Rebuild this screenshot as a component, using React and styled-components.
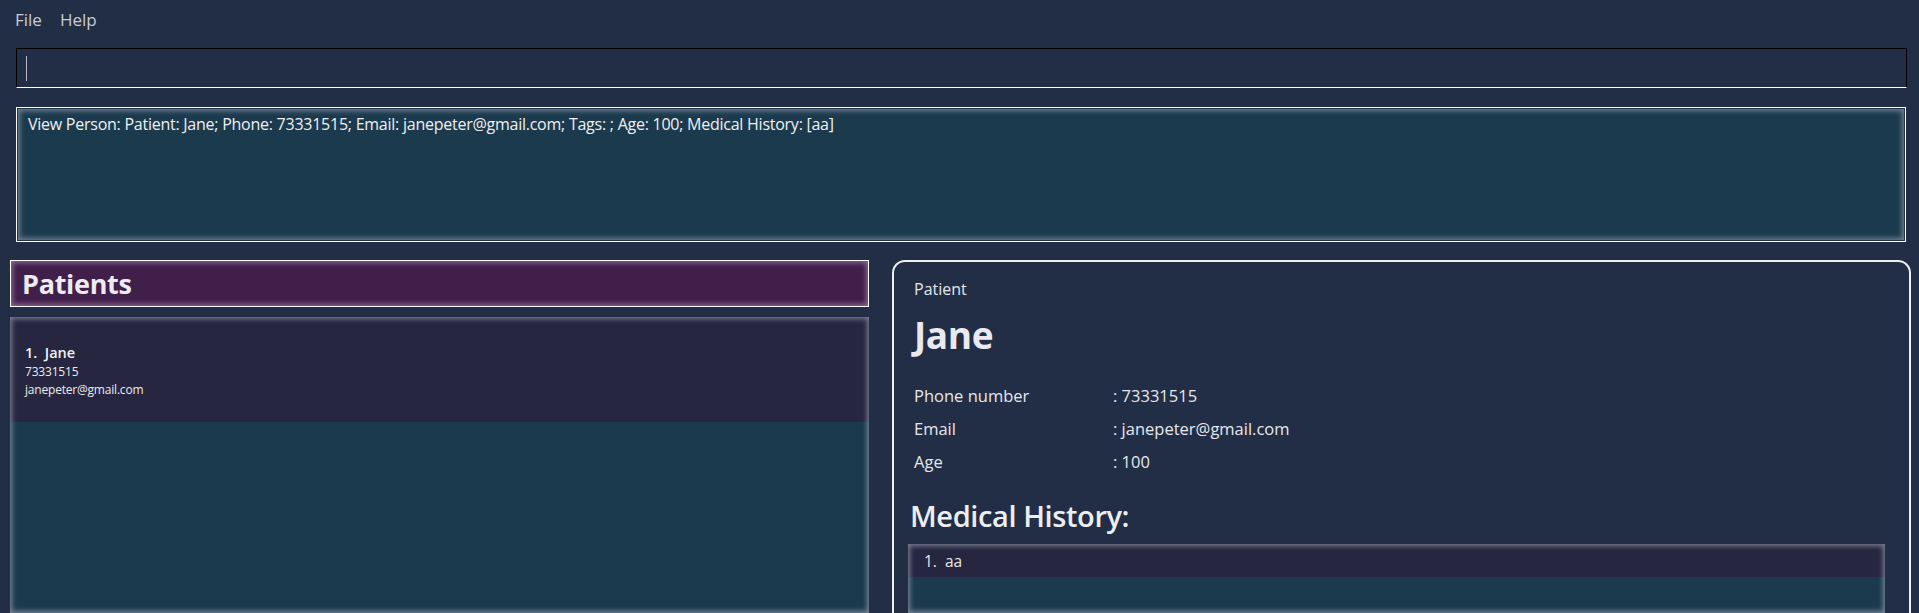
import styled, { createGlobalStyle } from "styled-components"

const GlobalStyle = createGlobalStyle`
  *, *::before, *::after {
    box-sizing: border-box;
  }
  html, body {
    margin: 0;
    padding: 0;
    background: #222e45;
  }
  body {
    font-family: 'Open Sans', 'Noto Sans', sans-serif;
    color: #e8e8e8;
    overflow: hidden;
  }
`

const Window = styled.div`
  height: 613px;
  display: flex;
  flex-direction: column;
  background: #222e45;
  overflow: hidden;
`

const MenuBar = styled.div`
  height: 39px;
  flex-shrink: 0;
  display: flex;
  align-items: center;
  gap: 18px;
  padding-left: 15px;
`

const MenuItem = styled.span`
  font-size: 17px;
  color: #c9ccd2;
`

const CommandBox = styled.div`
  height: 40px;
  flex-shrink: 0;
  margin: 9px 12px 0 16px;
  border: 1px solid #000;
  border-bottom-color: #fff;
  display: flex;
  align-items: center;
  padding-left: 9px;
`

const Caret = styled.div`
  width: 1px;
  height: 25px;
  background: #b8bcc4;
`

const ResultBox = styled.div`
  height: 135px;
  flex-shrink: 0;
  margin: 19px 13px 0 16px;
  border: 1px solid #fff;
  background: #1c3a4e;
  box-shadow: inset 0 0 0 1px #24324a, inset 0 0 5px 3px rgba(190, 200, 210, 0.5);
  padding: 5px 11px;
  font-size: 16px;
  letter-spacing: -0.25px;
  color: #f0f0f0;
`

const Main = styled.div`
  flex: 1;
  display: flex;
  gap: 23px;
  margin: 18px 8px 0 10px;
  min-height: 0;
`

const LeftColumn = styled.div`
  width: 859px;
  display: flex;
  flex-direction: column;
  gap: 10px;
`

const PanelHeader = styled.div`
  height: 47px;
  flex-shrink: 0;
  border: 1px solid #fff;
  background: #411f4b;
  box-shadow: inset 0 0 5px 2px rgba(200, 160, 210, 0.55);
  display: flex;
  align-items: center;
  padding-left: 11px;
  font-size: 27px;
  font-weight: 700;
  color: #ececf0;
  letter-spacing: -0.3px;
`

const GlowFrame = styled.div`
  position: relative;
  flex: 1;
  background: #1c3a4e;
  display: flex;
  flex-direction: column;

  &::after {
    content: '';
    position: absolute;
    inset: 0;
    pointer-events: none;
    box-shadow: inset 0 0 5px 2px rgba(190, 195, 210, 0.55);
  }
`

const PersonCard = styled.div`
  height: 105px;
  background: #262641;
  padding: 2px 15px 0;
  display: flex;
  flex-direction: column;
  justify-content: center;
`

const CardName = styled.div`
  font-size: 14.5px;
  font-weight: 600;
  color: #f2f2f2;
  margin-bottom: 1px;
  white-space: pre;
`

const CardLine = styled.div`
  font-size: 12px;
  line-height: 18px;
  color: #ececec;
  letter-spacing: -0.2px;
`

const DetailPanel = styled.div`
  flex: 1;
  border: 2px solid #eef0f4;
  border-bottom: none;
  border-radius: 13px 13px 0 0;
  padding: 16px 24px 0 14px;
  display: flex;
  flex-direction: column;
`

const InfoBlock = styled.div`
  padding-left: 6px;
`

const Caption = styled.div`
  font-size: 16px;
  line-height: 22px;
  color: #e4e6ea;
`

const Name = styled.div`
  font-size: 37px;
  font-weight: 700;
  line-height: 48px;
  margin-top: 11px;
  color: #eaeaee;
  letter-spacing: -0.4px;
`

const FieldTable = styled.div`
  display: grid;
  grid-template-columns: 199px 1fr;
  grid-auto-rows: 33px;
  align-items: center;
  margin-top: 20px;
  font-size: 16.5px;
  color: #e6e8ec;
`

const SectionTitle = styled.div`
  font-size: 29px;
  font-weight: 600;
  line-height: 38px;
  margin-top: 19px;
  padding-left: 2px;
  color: #eceef2;
  letter-spacing: -0.4px;
`

const HistoryFrame = styled(GlowFrame)`
  margin-top: 9px;
`

const HistoryItem = styled.div`
  height: 33px;
  background: #262641;
  display: flex;
  align-items: center;
  padding-left: 16px;
  font-size: 15.5px;
  color: #eaeaea;
  white-space: pre;
`

const fields = [
  ['Phone number', ': 73331515'],
  ['Email', ': janepeter@gmail.com'],
  ['Age', ': 100'],
]

export default function App() {
  return (
    <>
      <GlobalStyle />
      <Window>
        <MenuBar>
          <MenuItem>File</MenuItem>
          <MenuItem>Help</MenuItem>
        </MenuBar>
        <CommandBox>
          <Caret />
        </CommandBox>
        <ResultBox>
          View Person: Patient: Jane; Phone: 73331515; Email: janepeter@gmail.com; Tags: ; Age: 100; Medical History: [aa]
        </ResultBox>
        <Main>
          <LeftColumn>
            <PanelHeader>Patients</PanelHeader>
            <GlowFrame>
              <PersonCard>
                <CardName>{'1.  Jane'}</CardName>
                <CardLine>73331515</CardLine>
                <CardLine>janepeter@gmail.com</CardLine>
              </PersonCard>
            </GlowFrame>
          </LeftColumn>
          <DetailPanel>
            <InfoBlock>
              <Caption>Patient</Caption>
              <Name>Jane</Name>
              <FieldTable>
                {fields.map(([label, value]) => [
                  <span key={label}>{label}</span>,
                  <span key={label + '-v'}>{value}</span>,
                ])}
              </FieldTable>
            </InfoBlock>
            <SectionTitle>Medical History:</SectionTitle>
            <HistoryFrame>
              <HistoryItem>{'1.  aa'}</HistoryItem>
            </HistoryFrame>
          </DetailPanel>
        </Main>
      </Window>
    </>
  )
}
